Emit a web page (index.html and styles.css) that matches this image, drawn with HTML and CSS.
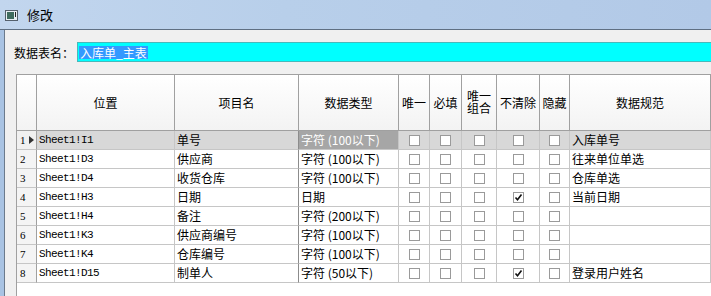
FILE: index.html
```html
<!DOCTYPE html>
<html lang="zh-CN">

<head>
    <meta charset="UTF-8">
    <title>修改</title>
    <link rel="stylesheet" href="styles.css">
</head>

<body>
    <div class="window">
        <!-- Title bar -->
        <div class="titlebar">
            <svg class="app-icon" width="13" height="11" viewBox="0 0 13 11">
                <rect x="0.5" y="0.5" width="12" height="10" fill="#e8eef4" stroke="#55606c" />
                <rect x="2" y="2" width="7" height="7" fill="#3f6b5e" />
                <rect x="10" y="2" width="1" height="5" fill="#222" />
            </svg>
            <span class="title">修改</span>
        </div>

        <!-- Client area -->
        <div class="client">
            <div class="name-row">
                <span class="name-label">数据表名：</span>
                <div class="name-input"><span class="selected">入库单_主表</span></div>
            </div>

            <div class="grid">
                <div class="row head">
                    <div class="cell"></div>
                    <div class="cell">位置</div>
                    <div class="cell">项目名</div>
                    <div class="cell">数据类型</div>
                    <div class="cell">唯一</div>
                    <div class="cell">必填</div>
                    <div class="cell two-line"><span>唯一</span><span>组合</span></div>
                    <div class="cell">不清除</div>
                    <div class="cell">隐藏</div>
                    <div class="cell">数据规范</div>
                    <div class="cell"></div>
                </div>
                <div id="rows"></div>
            </div>
        </div>
    </div>

    <script>
        const items = [
            ['Sheet1!I1', '单号', '字符 (100以下)', false, '入库单号'],
            ['Sheet1!D3', '供应商', '字符 (100以下)', false, '往来单位单选'],
            ['Sheet1!D4', '收货仓库', '字符 (100以下)', false, '仓库单选'],
            ['Sheet1!H3', '日期', '日期', true, '当前日期'],
            ['Sheet1!H4', '备注', '字符 (200以下)', false, ''],
            ['Sheet1!K3', '供应商编号', '字符 (100以下)', false, ''],
            ['Sheet1!K4', '仓库编号', '字符 (100以下)', false, ''],
            ['Sheet1!D15', '制单人', '字符 (50以下)', true, '登录用户姓名']
        ];

        const box = '<span class="cb"></span>';
        const checked = '<span class="cb"><svg width="9" height="9" viewBox="0 0 9 9"><path d="M1.5 4.5 L3.5 6.8 L7.5 1.5" fill="none" stroke="#111" stroke-width="1.6"/></svg></span>';

        const rows = document.getElementById('rows');
        items.forEach((item, i) => {
            const row = document.createElement('div');
            row.classList.add('row', 'body');
            if (i === 0) row.classList.add('current');
            row.innerHTML = `
                <div class="cell num">${i + 1}${i === 0 ? '<span class="arrow"></span>' : ''}</div>
                <div class="cell pos">${item[0]}</div>
                <div class="cell">${item[1]}</div>
                <div class="cell type">${item[2]}</div>
                <div class="cell check">${box}</div>
                <div class="cell check">${box}</div>
                <div class="cell check">${box}</div>
                <div class="cell check">${item[3] ? checked : box}</div>
                <div class="cell check">${box}</div>
                <div class="cell">${item[4]}</div>
                <div class="cell"></div>
            `;
            rows.appendChild(row);
        });
    </script>
</body>

</html>
```

FILE: styles.css
```css
html,
body {
    margin: 0;
    padding: 0;
    height: 100%;
    overflow: hidden;
}

body {
    background: #a9c3e3;
    font-family: "Noto Sans CJK SC", "Liberation Sans", sans-serif;
    font-size: 12px;
    color: #000;
}

.window {
    height: 100%;
    display: flex;
    flex-direction: column;
}

/* Title bar */
.titlebar {
    height: 29px;
    display: flex;
    align-items: center;
    padding-left: 5px;
    background: linear-gradient(90deg, #c2d6ee 0%, #b8cfea 40%, #b2c9e7 100%);
    border-bottom: 1px solid #5f6f82;
}

.app-icon {
    margin-top: 1px;
}

.title {
    margin-left: 9px;
    font-size: 13px;
}

/* Client area */
.client {
    flex: 1;
    margin-left: 4px;
    border-left: 1px solid #6b7a8c;
    background: #f0f0f0;
    display: flex;
    flex-direction: column;
    padding: 12px 0 0 11px;
    min-height: 0;
    overflow: hidden;
}

.name-row {
    display: flex;
    align-items: center;
    height: 20px;
    margin-left: -2px;
}

.name-label {
    width: 63px;
    font-size: 12px;
}

.name-input {
    flex: 1;
    height: 20px;
    box-sizing: border-box;
    background: #00ffff;
    border: 1px solid #47b9bb;
    border-right: none;
    display: flex;
    align-items: center;
    padding-left: 1px;
}

.selected {
    background: #3399ff;
    color: #fff;
    line-height: 13px;
    padding: 0 1px;
}

/* Data grid */
.grid {
    flex: 1;
    margin-top: 12px;
    background: #fff;
    border-left: 1px solid #a0a0a0;
    border-top: 1px solid #a0a0a0;
    overflow: hidden;
}

.row {
    display: grid;
    grid-template-columns: 20px 138px 124px 100px 31px 32px 35px 43px 30px 141px 100px;
}

.cell {
    box-sizing: border-box;
    border-right: 1px solid #c6c6c6;
    border-bottom: 1px solid #c6c6c6;
    white-space: nowrap;
    overflow: hidden;
}

.head .cell {
    height: 56px;
    background: linear-gradient(#ffffff, #f3f3f3);
    border-right-color: #a0a0a0;
    border-bottom-color: #a0a0a0;
    display: flex;
    align-items: center;
    justify-content: center;
    text-align: center;
}

.head .two-line {
    flex-direction: column;
    padding-bottom: 2px;
}

.two-line span {
    line-height: 12px;
}

.body .cell {
    height: 19px;
    line-height: 18px;
    padding-left: 2px;
}

.body .num {
    background: #f4f4f4;
    border-right-color: #a0a0a0;
    font-family: "Liberation Serif", serif;
    font-size: 11px;
    padding-left: 3px;
    display: flex;
    align-items: center;
    gap: 3px;
}

.arrow {
    width: 0;
    height: 0;
    border-top: 4px solid transparent;
    border-bottom: 4px solid transparent;
    border-left: 5px solid #333;
}

.body .pos {
    font-family: "Liberation Mono", monospace;
    font-size: 11px;
    letter-spacing: -0.6px;
    color: #000;
}

.body .cell:nth-child(3) {
    border-right-color: #8c8c8c;
}

.body .check {
    padding-left: 0;
    display: flex;
    align-items: center;
    justify-content: center;
}

.cb {
    width: 11px;
    height: 11px;
    box-sizing: border-box;
    border: 1px solid #9a9a9a;
    background: #fff;
    display: flex;
    align-items: center;
    justify-content: center;
}

/* Current row */
.current .cell {
    background: #d8d8d8;
}

.current .num {
    background: #f0f0f0;
}

.current .type {
    background: #a6a6a6;
    color: #fff;
}
```
